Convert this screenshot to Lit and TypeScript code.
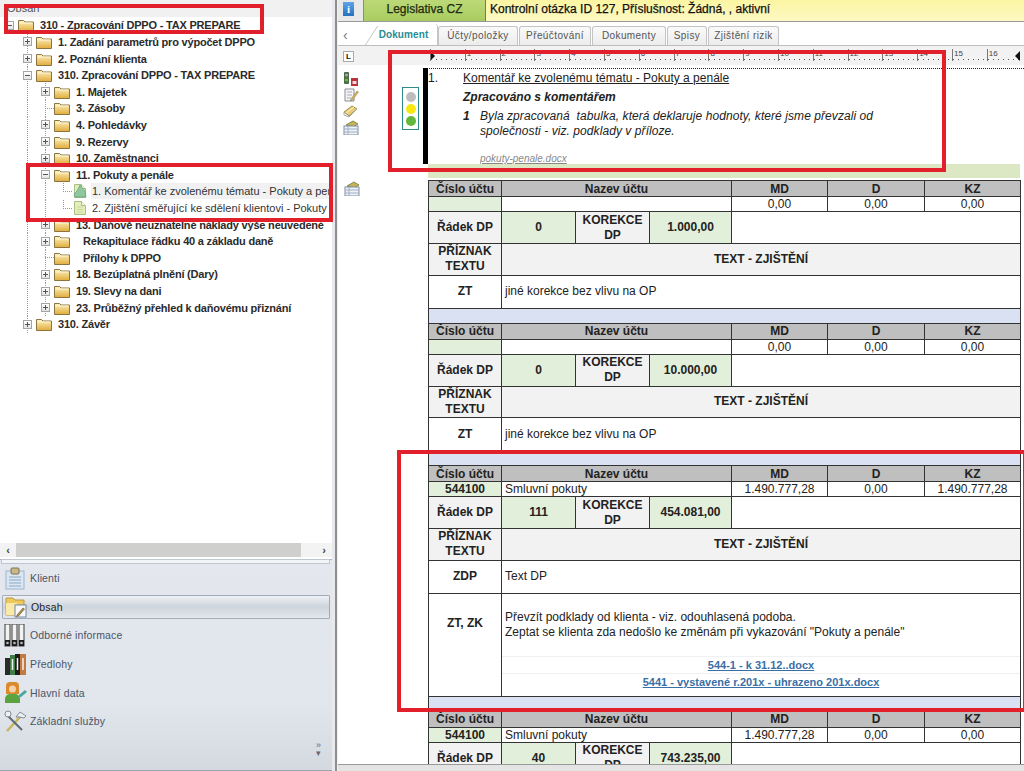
import { LitElement, html, css, svg } from 'lit';
import { customElement } from 'lit/decorators.js';

type Row = {
  label: string;
  depth: number;
  exp?: 'plus' | 'minus';
  doc?: boolean;
  sel?: boolean;
  extra?: boolean;
};

const TREE: Row[] = [
  { label: '310 - Zpracování DPPO - TAX PREPARE', depth: 0, exp: 'minus' },
  { label: '1. Zadání parametrů pro výpočet DPPO', depth: 1, exp: 'plus' },
  { label: '2. Poznání klienta', depth: 1, exp: 'plus' },
  { label: '310. Zpracování DPPO - TAX PREPARE', depth: 1, exp: 'minus' },
  { label: '1. Majetek', depth: 2, exp: 'plus' },
  { label: '3. Zásoby', depth: 2 },
  { label: '4. Pohledávky', depth: 2, exp: 'plus' },
  { label: '9. Rezervy', depth: 2, exp: 'plus' },
  { label: '10. Zaměstnanci', depth: 2, exp: 'plus' },
  { label: '11. Pokuty a penále', depth: 2, exp: 'minus' },
  { label: '1. Komentář ke zvolenému tématu - Pokuty a penále', depth: 3, doc: true, sel: true },
  { label: '2. Zjištění směřující ke sdělení klientovi - Pokuty a penále', depth: 3, doc: true },
  { label: '13. Daňově neuznatelné náklady výše neuvedené', depth: 2, exp: 'plus' },
  { label: 'Rekapitulace řádku 40 a základu daně', depth: 2, exp: 'plus', extra: true },
  { label: 'Přílohy k DPPO', depth: 2, extra: true },
  { label: '18. Bezúplatná plnění (Dary)', depth: 2, exp: 'plus' },
  { label: '19. Slevy na dani', depth: 2, exp: 'plus' },
  { label: '23. Průběžný přehled k daňovému přiznání', depth: 2, exp: 'plus' },
  { label: '310. Závěr', depth: 1, exp: 'plus' },
];

const TABS = [
  { t: 'Dokument', w: 74 },
  { t: 'Účty/položky', w: 80 },
  { t: 'Přeúčtování', w: 72 },
  { t: 'Dokumenty', w: 74 },
  { t: 'Spisy', w: 40 },
  { t: 'Zjištění rizik', w: 71 },
];

const NAV = [
  { t: 'Klienti', i: 'clip' },
  { t: 'Obsah', i: 'folder', active: true },
  { t: 'Odborné informace', i: 'binders' },
  { t: 'Předlohy', i: 'books' },
  { t: 'Hlavní data', i: 'person' },
  { t: 'Základní služby', i: 'tools' },
];

const BLOCKS = [
  { no: '', name: '', md: '0,00', d: '0,00', kz: '0,00', dp: '0', kor: '1.000,00', flag: 'ZT', text: 'jiné korekce bez vlivu na OP' },
  { no: '', name: '', md: '0,00', d: '0,00', kz: '0,00', dp: '0', kor: '10.000,00', flag: 'ZT', text: 'jiné korekce bez vlivu na OP' },
  { no: '544100', name: 'Smluvní pokuty', md: '1.490.777,28', d: '0,00', kz: '1.490.777,28', dp: '111', kor: '454.081,00', flag: 'ZDP', text: 'Text DP', long: true },
  { no: '544100', name: 'Smluvní pokuty', md: '1.490.777,28', d: '0,00', kz: '0,00', dp: '40', kor: '743.235,00' },
];

const folderIcon = html`<svg class="ico" viewBox="0 0 16 14" width="16" height="14">
  <defs><linearGradient id="fg" x1="0" y1="0" x2="0" y2="1"><stop offset="0" stop-color="#fff2bf"/><stop offset="1" stop-color="#e0ac3c"/></linearGradient></defs>
  <path d="M.5 2.5h5l1.5 1.5h8.5v9.500h-15z" fill="url(#fg)" stroke="#8a7440"/>
  <path d="M1.500 5h13" stroke="#fff8dc"/>
</svg>`;

const docIcon = (sel?: boolean) => html`<svg class="ico" viewBox="0 0 16 16" width="16" height="16">
  <path d="M2.500 1.500h7l4 4v9h-11z" fill="#e3eeb8" stroke="#a9bf86"/>
  <path d="M9.500 1.500v4h4" fill="#f6fae6" stroke="#a9bf86"/>
  ${sel
    ? svg`<path d="M8 2l5 6 1 6H3l-1-3 3-3z" fill="#8fc7a0" stroke="#5f9f7d" stroke-width=".7"/>`
    : svg`<path d="M5 7h6M5 9.500h6M5 12h6" stroke="#c6d8a0"/>`}
</svg>`;

const smallIcons = [
  svg`<rect x="1" y="0" width="5" height="12" rx="1" fill="#4b6b4b"/><circle cx="3.500" cy="3" r="1.500" fill="#aaa"/><circle cx="3.500" cy="8" r="1.500" fill="#6cbf3f"/><rect x="8" y="6" width="7" height="8" fill="#b8323c"/><rect x="9.500" y="9" width="4" height="3" fill="#f3d9d9"/>`,
  svg`<path d="M2 1h9v12H2z" fill="#f4f4f4" stroke="#8a8a9a"/><path d="M4 4h5M4 7h5M4 10h4" stroke="#aab"/><path d="M8 11l6-8 1.500 1-6 8-2 1z" fill="#d9b45a" stroke="#8a7440" stroke-width=".5"/>`,
  svg`<path d="M1 8l8-6 5 3-8 7z" fill="#e7cf7a" stroke="#a08c4a"/><path d="M3 9l8-6" stroke="#fff3c0"/><path d="M1 8v3l5 2 8-8" fill="none" stroke="#a9a9a9"/>`,
  svg`<path d="M3 5l7-4 5 3-5 3z" fill="#c9b15a" stroke="#7d8f4c"/><rect x="1" y="6" width="14" height="9" fill="#eef2f7" stroke="#7f8ea3"/><path d="M1 9h14M1 12h14M5 6v9" stroke="#9fb0c6"/>`,
];

function small(i: number) {
  return html`<svg viewBox="0 0 16 15" width="16" height="15">${smallIcons[i]}</svg>`;
}

const navIcons: Record<string, unknown> = {
  clip: svg`<rect x="3" y="4" width="18" height="18" fill="#d9e7f4" stroke="#9db3cb"/><rect x="8" y="1" width="8" height="6" rx="1" fill="#c9b98a" stroke="#7d7350"/><path d="M6 10h12M6 13h12M6 16h12M6 19h12" stroke="#8ea6c0"/>`,
  folder: svg`<path d="M2 3h7l2 2h9v15H2z" fill="#eec95c" stroke="#b79a45"/><path d="M2 8h11v12H2z" fill="#fbe9a8"/><rect x="11" y="10" width="11" height="12" fill="#f7f9fc" stroke="#6f88a8"/><path d="M13 20l6-7 1.500 1-6 7-2 .5z" fill="#b9954a" stroke="#5b4c24" stroke-width=".6"/>`,
  binders: svg`<rect x="2" y="0" width="5" height="22" fill="#f1f3f1" stroke="#3a3a3a"/><rect x="9" y="0" width="5" height="22" fill="#f1f3f1" stroke="#3a3a3a"/><rect x="16" y="0" width="5" height="22" fill="#f1f3f1" stroke="#3a3a3a"/><rect x="2" y="16" width="5" height="6" fill="#1c1c1c"/><rect x="9" y="16" width="5" height="6" fill="#1c1c1c"/><rect x="16" y="16" width="5" height="6" fill="#1c1c1c"/><circle cx="4.500" cy="19" r="1.300" fill="#bbb"/><circle cx="11.500" cy="19" r="1.300" fill="#bbb"/><circle cx="18.500" cy="19" r="1.300" fill="#bbb"/>`,
  books: svg`<rect x="2" y="5" width="5" height="17" fill="#2a2a2a"/><rect x="7" y="2" width="5" height="20" fill="#3f7f45"/><rect x="12" y="1" width="5" height="21" fill="#1d1d1d"/><rect x="17" y="1" width="6" height="21" fill="#c47a3e"/><path d="M9.500 6v11M14.500 5v12M20 5v12" stroke="#f2f2f2" stroke-width="1.500"/>`,
  person: svg`<path d="M7 1h5a4 4 0 0 1 4 4v8H3V5a4 4 0 0 1 4-4z" fill="#d98a2e"/><circle cx="9.500" cy="8" r="3.500" fill="#f4d2a8"/><path d="M2 22v-4a5 5 0 0 1 5-5h5a5 5 0 0 1 5 5v4z" fill="#5ba33f"/><path d="M16 14l6-5 2 2-6 5-3 1z" fill="#49a7a0"/>`,
  tools: svg`<path d="M4 21L17 7" stroke="#c9b45a" stroke-width="2.500"/><path d="M4 5l15 15" stroke="#5f6977" stroke-width="2"/><path d="M13 7l4-5 6 4-2 2-4-1z" fill="#eef1f4" stroke="#6a7280" stroke-width=".8"/><circle cx="5" cy="4" r="3" fill="#eef1f4" stroke="#6a7280" stroke-width=".8"/>`,
};

@customElement('app-root')
export class AppRoot extends LitElement {
  static styles = css`
    :host {
      display: block;
      position: relative;
      width: 1024px;
      height: 771px;
      overflow: hidden;
      background: #fff;
      font-family: 'Liberation Sans', Arial, sans-serif;
      color: #222;
    }
    .app { display: flex; height: 771px; }

    /* left column */
    .left {
      width: 332px;
      flex: none;
      display: flex;
      flex-direction: column;
      background: #fff;
    }
    .left-head {
      height: 17px;
      flex: none;
      background: #f1f1f1;
      font: 11px 'Liberation Sans', sans-serif;
      color: #555;
      line-height: 16px;
      padding-left: 7px;
      box-sizing: border-box;
    }
    .tree { flex: 1; overflow: hidden; }
    .row {
      display: flex;
      align-items: center;
      height: 16.62px;
      white-space: nowrap;
      overflow: hidden;
    }
    .cell { width: 18px; height: 100%; flex: none; display: flex; align-items: center; justify-content: center; }
    .guide { background: repeating-linear-gradient(#999 0 1px, transparent 1px 2px) 9px 0 / 1px 100% no-repeat; }
    .elbow {
      background:
        repeating-linear-gradient(#999 0 1px, transparent 1px 2px) 9px 0 / 1px 50% no-repeat,
        repeating-linear-gradient(90deg, #999 0 1px, transparent 1px 2px) 9px 50% / 9px 1px no-repeat;
    }
    .tee {
      background:
        repeating-linear-gradient(#999 0 1px, transparent 1px 2px) 9px 0 / 1px 100% no-repeat,
        repeating-linear-gradient(90deg, #999 0 1px, transparent 1px 2px) 9px 50% / 9px 1px no-repeat;
    }
    .box {
      width: 9px;
      height: 9px;
      box-sizing: border-box;
      border: 1px solid #a5a5a5;
      background: linear-gradient(#fff, #e4e4e4);
      color: #555;
      display: flex;
      align-items: center;
      justify-content: center;
    }
    .ico { flex: none; }
    .label {
      font-size: 11px;
      font-weight: 700;
      letter-spacing: -0.2px;
      color: #2b2b2b;
      margin-left: 5px;
      padding: 0 1px;
      line-height: 16px;
      flex: none;
    }
    .label.extra { margin-left: 12px; }
    .label.doc { font-weight: 400; letter-spacing: 0; margin-left: 3px; color: #333; }
    .label.sel { background: #f1f1f1; flex: 1; }

    .hscroll {
      flex: none;
      height: 14px;
      display: flex;
      align-items: center;
      justify-content: space-between;
      background: #f3f3f3;
      margin-bottom: 2px;
      font-size: 11px;
      font-weight: 700;
      color: #444;
    }
    .hscroll b { width: 16px; text-align: center; }
    .thumb { width: 285px; height: 14px; background: #cfcfcd; flex: none; }
    .nav {
      flex: none;
      height: 212px;
      box-sizing: border-box;
      background: linear-gradient(#e4e8ee, #e1e5ec 70%, #d4d8df);
      border-top: 1px solid #a9b2bd;
      border-bottom: 1px solid #9aa2ad;
      display: flex;
      flex-direction: column;
    }
    .grip { height: 3px; flex: none; margin: -1px 2px 0 1px; border: 1px solid #c1c7cf; background: #f2f4f7; }
    .items { display: flex; flex-direction: column; }
    .item {
      height: 28.6px;
      display: flex;
      align-items: center;
      gap: 3px;
      padding-left: 3px;
      font-size: 10.5px;
      letter-spacing: 0.15px;
      color: #4a5568;
      box-sizing: border-box;
    }
    .item.active {
      color: #222;
      margin: 2px;
      height: 24.6px;
      padding-left: 1px;
      background: linear-gradient(#eef1f5, #ced4dc 50%, #e3e7ec);
      border: 1px solid #a2acb8;
      border-radius: 1px;
    }
    .more { margin: 5px 11px 0 auto; font-size: 9px; color: #667; line-height: 8px; text-align: center; }

    .split {
      width: 6px;
      flex: none;
      background: linear-gradient(90deg, #e7e9ec 0 3px, #8e8e8e 3px 5px, #f0f0f0 5px);
    }

    /* right column */
    .right { flex: 1; min-width: 0; display: flex; flex-direction: column; font-size: 12px; }
    .topbar { height: 21px; flex: none; display: flex; border-bottom: 1px solid #9a9a9a; background: #e9e9e9; margin-bottom: 2px; }
    .info {
      width: 11px;
      height: 14px;
      margin: 2px 0 0 5px;
      background: linear-gradient(#5fa5e6, #2272c0);
      color: #fff;
      font: 700 11px/14px 'Liberation Serif', serif;
      text-align: center;
      flex: none;
    }
    .legis {
      margin-left: 9px;
      width: 121px;
      flex: none;
      background: linear-gradient(#bcd977, #a9cc61);
      text-align: center;
      line-height: 18px;
      color: #1f2a10;
      border-left: 1px solid #7f9c55;
      -webkit-text-stroke: 0.25px #1f2a10;
    }
    .yellow {
      flex: 1;
      background: linear-gradient(#fbf5a2, #fdf9c4);
      border-left: 1px solid #777;
      padding-left: 4px;
      line-height: 18px;
      color: #111;
      font-size: 12px;
      -webkit-text-stroke: 0.25px #111;
    }
    .tabs { height: 21px; flex: none; display: flex; align-items: flex-end; padding-left: 26px; border-bottom: 1px solid #bdbdbd; }
    .back { width: 0; color: #777; position: relative; left: -21px; align-self: center; font-size: 14px; }
    .tab {
      height: 19px;
      box-sizing: border-box;
      border: 1px solid #c4c4c4;
      border-bottom: none;
      border-radius: 3px 3px 0 0;
      margin-right: 1px;
      background: linear-gradient(#fafafa, #ececec);
      font-size: 10px;
      letter-spacing: 0.4px;
      color: #555;
      text-align: center;
      line-height: 18px;
      flex: none;
    }
    .tab.on {
      position: relative;
      background: #fff;
      color: #2a8c94;
      font-weight: 700;
      letter-spacing: 0.1px;
      margin-right: 0;
      padding-left: 6px;
      height: 21px;
      line-height: 21px;
      border-top: none;
      border-left: none;
    }
    /* slanted left edge of the active tab */
    .tab.on::before {
      content: '';
      position: absolute;
      left: 7px;
      top: 2px;
      width: 1px;
      height: 19px;
      background: #c4c4c4;
      transform: skewX(-33deg);
    }
    .rulerbar { height: 22px; flex: none; display: flex; align-items: flex-start; background: linear-gradient(#f2f2f2 19px, #fff 19px); }
    .lbox {
      width: 11px;
      height: 11px;
      box-sizing: border-box;
      margin: 5px 0 0 5px;
      border: 1px solid #aaa;
      background: #fff;
      font: 700 8px/9px 'Liberation Sans', sans-serif;
      text-align: center;
      color: #111;
      flex: none;
    }
    .ruler { margin: 3px 0 0 76px; display: flex; }
    .tick {
      width: 34.8px;
      height: 12px;
      flex: none;
      box-sizing: border-box;
      border-left: 1px solid #777;
      font-size: 8px;
      line-height: 9px;
      color: #444;
      padding-left: 1px;
      background: repeating-linear-gradient(90deg, #555 0 1px, transparent 1px 5px) 0 10px / 100% 1px no-repeat;
    }
    .rule-start { width: 0; height: 0; border: 5px solid transparent; border-left: 5px solid #111; margin: 2px -10px 0 0; flex: none; }
    .rule-end { width: 0; height: 0; border: 5px solid transparent; border-right: 5px solid #111; margin: 2px 0 0 -12px; flex: none; }
    .dotted { height: 0; margin-left: 86px; border-top: 1px dotted #222; flex: none; margin-bottom: -1px; }

    .comment { height: 96px; flex: none; display: flex; }
    .tools { width: 22px; flex: none; padding: 4px 0 0 5px; box-sizing: border-box; display: flex; flex-direction: column; }
    .tools svg { display: block; margin-bottom: 1px; }
    .traffic-col { width: 63px; flex: none; display: flex; justify-content: center; padding: 19px 0 0 38px; box-sizing: border-box; }
    .traffic {
      width: 17px;
      height: 43px;
      box-sizing: border-box;
      border: 1.5px solid #2e8b8b;
      display: flex;
      flex-direction: column;
      align-items: center;
      gap: 2px;
      padding-top: 4px;
    }
    .lamp { width: 10px; height: 10px; border-radius: 50%; flex: none; }
    .bar { width: 5px; background: #000; flex: none; }
    .ctext { flex: 1; font-size: 12px; color: #222; display: grid; grid-template-columns: 35px 17px 1fr; grid-auto-rows: min-content; }
    .ctext .n1 { padding-top: 3px; line-height: 14px; grid-column: 1; }
    .ctext .title { padding-top: 3px; grid-column: 2 / 4; text-decoration: underline; line-height: 14px; }
    .ctext .h { grid-column: 2 / 4; font-weight: 700; font-style: italic; line-height: 14px; padding-top: 5px; }
    .ctext .num { grid-column: 2; font-weight: 700; font-style: italic; padding-top: 5px; line-height: 15px; }
    .ctext .body { grid-column: 3; font-style: italic; padding-top: 5px; line-height: 15px; width: 400px; letter-spacing: 0.07px; }
    .ctext .file {
      grid-column: 3;
      width: 393px;
      margin-top: 13px;
      font-size: 10px;
      font-style: italic;
      color: #888;
      line-height: 13px;
      border-bottom: 1px solid #3c9d92;
      text-decoration: underline;
      height: 13px;
      overflow: hidden;
    }
    .strip { height: 14px; flex: none; margin-left: 90px; margin-right: 4px; background: #dbe8c3; }

    .main { flex: 1; min-height: 0; overflow: hidden; display: flex; padding-top: 2px; }
    .main .tools { width: 90px; padding: 1px 0 0 6px; }
    table {
      width: 592px;
      height: min-content;
      flex: none;
      table-layout: fixed;
      border-collapse: collapse;
      font-size: 12px;
    }
    td { border: 1px solid #333; padding: 0; text-align: center; color: #222; overflow: hidden; line-height: 15px; }
    .hd { height: 15px; background: #bfbfbf; font-weight: 700; line-height: 14px; }
    .vals { height: 14px; line-height: 14px; }
    .gr { background: #e2efda; font-weight: 700; }
    .lg { background: #f2f2f2; font-weight: 700; }
    .b { font-weight: 700; }
    .l { text-align: left; padding-left: 3px; }
    .dp { height: 31px; }
    .fl { height: 30.5px; }
    .zt { height: 32px; }
    .band { height: 14px; background: #d9e1f2; }
    .tall { height: 102px; vertical-align: top; text-align: left; }
    .tall-flag { height: 60px; vertical-align: middle; text-align: center; padding-bottom: 42px; }
    .long { padding: 16px 0 0 3px; line-height: 15.500px; height: 31px; }
    .attach { margin-top: 15px; }
    .attach a {
      display: block;
      height: 16.500px;
      line-height: 16px;
      text-align: center;
      font-size: 11px;
      font-weight: 700;
      color: #3a6fa5;
      text-decoration: underline;
      border-top: 1px solid #eef0f2;
    }
    .foot { height: 6px; flex: none; background: #e4e4e4; border-top: 1px solid #999; }

    /* red annotation boxes drawn over the screenshot */
    .mark { position: absolute; box-sizing: border-box; border: 4px solid #e1202c; pointer-events: none; }
  `;

  private renderRow(r: Row) {
    const cells = [];
    for (let i = 0; i < r.depth; i++) {
      cells.push(html`<span class="cell ${i === 0 ? '' : 'guide'}"></span>`);
    }
    const tail = r.exp
      ? html`<span class="cell ${r.depth ? 'guide' : ''}"><span class="box">
          <svg width="7" height="7" viewBox="0 0 7 7"><path d="M1 3.500h5${r.exp === 'plus' ? 'M3.500 1v5' : ''}" stroke="#555"/></svg>
        </span></span>`
      : html`<span class="cell ${r.doc ? 'elbow' : 'tee'}"></span>`;
    return html`<div class="row">
      ${cells}${tail}
      ${r.doc ? docIcon(r.sel) : folderIcon}
      <span class="label ${r.doc ? 'doc' : ''} ${r.sel ? 'sel' : ''} ${r.extra ? 'extra' : ''}">${r.label}</span>
    </div>`;
  }

  private renderBlock(b: (typeof BLOCKS)[number], i: number) {
    return html`
      ${i > 0 ? html`<tr><td class="band" colspan="7"></td></tr>` : ''}
      <tr>
        <td class="hd">Číslo účtu</td>
        <td class="hd" colspan="3">Nazev účtu</td>
        <td class="hd">MD</td>
        <td class="hd">D</td>
        <td class="hd">KZ</td>
      </tr>
      <tr>
        <td class="vals gr">${b.no}</td>
        <td class="vals l" colspan="3">${b.name}</td>
        <td class="vals">${b.md}</td>
        <td class="vals">${b.d}</td>
        <td class="vals">${b.kz}</td>
      </tr>
      <tr>
        <td class="dp lg">Řádek DP</td>
        <td class="dp gr">${b.dp}</td>
        <td class="dp lg">KOREKCE DP</td>
        <td class="dp gr">${b.kor}</td>
        <td class="dp" colspan="3"></td>
      </tr>
      ${b.flag
        ? html`<tr>
              <td class="fl lg">PŘÍZNAK TEXTU</td>
              <td class="fl lg" colspan="6">TEXT - ZJIŠTĚNÍ</td>
            </tr>
            <tr>
              <td class="zt b">${b.flag}</td>
              <td class="zt l" colspan="6">${b.text}</td>
            </tr>`
        : ''}
      ${b.long
        ? html`<tr>
            <td class="tall-flag b">ZT, ZK</td>
            <td class="tall" colspan="6">
              <div class="long">
                Převzít podklady od klienta - viz. odouhlasená podoba.<br />
                Zeptat se klienta zda nedošlo ke změnám při vykazování "Pokuty a penále"
              </div>
              <div class="attach">
                <a>544-1 - k 31.12..docx</a>
                <a>5441 - vystavené r.201x - uhrazeno 201x.docx</a>
              </div>
            </td>
          </tr>`
        : ''}
    `;
  }

  render() {
    return html`
      <div class="app">
        <div class="left">
          <div class="left-head">Obsah</div>
          <div class="tree">${TREE.map((r) => this.renderRow(r))}</div>
          <div class="hscroll"><b>‹</b><span class="thumb"></span><b style="margin-left:auto">›</b></div>
          <div class="nav">
            <div class="grip"></div>
            <div class="items">
              ${NAV.map(
                (n) => html`<div class="item ${n.active ? 'active' : ''}">
                  <svg width="24" height="23" viewBox="0 0 24 23">${navIcons[n.i]}</svg>
                  <span>${n.t}</span>
                </div>`,
              )}
            </div>
            <div class="more">»<br />▾</div>
          </div>
        </div>
        <div class="split"></div>
        <div class="right">
          <div class="topbar">
            <div class="info">i</div>
            <div class="legis">Legislativa CZ</div>
            <div class="yellow">Kontrolní otázka ID 127, Příslušnost: Žádná, , aktivní</div>
          </div>
          <div class="tabs">
            <span class="back">‹</span>
            ${TABS.map(
              (t, i) => html`<div class="tab ${i === 0 ? 'on' : ''}" style="width:${t.w}px">${t.t}</div>`,
            )}
          </div>
          <div class="rulerbar">
            <div class="lbox">L</div>
            <div class="ruler">
              <span class="rule-start"></span>
              ${Array.from({ length: 17 }, (_, i) => html`<span class="tick">${i || ''}</span>`)}
              <span class="rule-end"></span>
            </div>
          </div>
          <div class="dotted"></div>
          <div class="comment">
            <div class="tools">${[0, 1, 2, 3].map((i) => small(i))}</div>
            <div class="traffic-col">
              <div class="traffic">
                <span class="lamp" style="background:#bdbdbd"></span>
                <span class="lamp" style="background:#f7e811"></span>
                <span class="lamp" style="background:#62b73c"></span>
              </div>
            </div>
            <div class="bar"></div>
            <div class="ctext">
              <span class="n1">1.</span>
              <span class="title">Komentář ke zvolenému tématu - Pokuty a penále</span>
              <span class="h">Zpracováno s komentářem</span>
              <span class="num">1</span>
              <span class="body">Byla zpracovaná&nbsp; tabulka, která deklaruje hodnoty, které jsme převzali od společnosti - viz. podklady v příloze.</span>
              <span class="file">pokuty-penale.docx</span>
            </div>
          </div>
          <div class="strip"></div>
          <div class="main">
            <div class="tools">${small(3)}</div>
            <table>
              <colgroup>
                <col style="width:73px" /><col style="width:74px" /><col style="width:74px" />
                <col style="width:82px" /><col style="width:96px" /><col style="width:97px" /><col style="width:96px" />
              </colgroup>
              <tbody>${BLOCKS.map((b, i) => this.renderBlock(b, i))}</tbody>
            </table>
          </div>
          <div class="foot"></div>
        </div>
      </div>
      <div class="mark" style="left:4px;top:4px;width:260px;height:30px"></div>
      <div class="mark" style="left:26px;top:163px;width:307px;height:59px"></div>
      <div class="mark" style="left:388px;top:50px;width:558px;height:122px"></div>
      <div class="mark" style="left:397px;top:450px;width:630px;height:262px"></div>
    `;
  }
}
